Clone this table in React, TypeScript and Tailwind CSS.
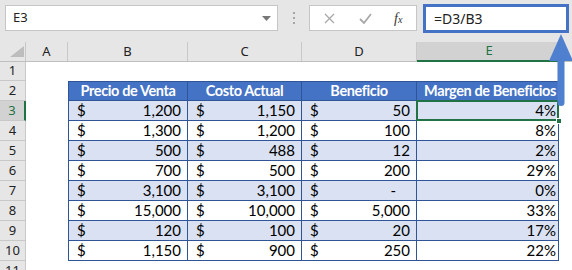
import React from 'react';

const rows = [
  ['1,200', '1,150', '50', '4%'],
  ['1,300', '1,200', '100', '8%'],
  ['500', '488', '12', '2%'],
  ['700', '500', '200', '29%'],
  ['3,100', '3,100', '-', '0%'],
  ['15,000', '10,000', '5,000', '33%'],
  ['120', '100', '20', '17%'],
  ['1,150', '900', '250', '22%'],
];

const cellFont = { fontFamily: 'Lato, "Liberation Sans", sans-serif' };

function Money({ value, width }: { value: string; width: string }) {
  return (
    <div className={`${width} h-full flex items-center justify-between pl-[8px] pr-[6px] border-r border-[#2f5597]`}>
      <span>$</span>
      {value === '-' ? <span className="mr-[14px]">-</span> : <span>{value}</span>}
    </div>
  );
}

export default function App() {
  return (
    <div className="relative w-[572px] h-[270px] overflow-hidden bg-white" style={{ fontFamily: '"Noto Sans", "Liberation Sans", sans-serif' }}>
      {/* formula bar */}
      <div className="h-[42px] bg-[#e6e6e6] flex items-start">
        <div className="ml-[5px] mt-[5px] w-[273px] h-[26px] bg-white border border-[#c6c6c6] flex items-center justify-between pl-[7px] pr-[6px]">
          <span className="text-[13px] text-[#222]">E3</span>
          <svg width="9" height="5" viewBox="0 0 9 5"><path d="M0 0h9L4.5 5z" fill="#777" /></svg>
        </div>
        <div className="w-[31px] h-[36px] flex flex-col items-center justify-center gap-[3px]">
          <span className="w-[2px] h-[2px] bg-[#a6a6a6]" />
          <span className="w-[2px] h-[2px] bg-[#a6a6a6]" />
          <span className="w-[2px] h-[2px] bg-[#a6a6a6]" />
        </div>
        <div className="mt-[5px] w-[108px] h-[26px] bg-white border border-[#c6c6c6] flex items-center">
          <svg className="ml-[14px]" width="11" height="11" viewBox="0 0 11 11"><path d="M1 1l9 9M10 1l-9 9" stroke="#a8a8a8" strokeWidth="1.3" /></svg>
          <svg className="ml-[24px]" width="13" height="11" viewBox="0 0 13 11"><path d="M1 6l4 4 7-9" stroke="#a8a8a8" strokeWidth="1.8" fill="none" /></svg>
          <span className="ml-[22px] text-[14px] italic text-[#333]" style={{ fontFamily: '"Liberation Serif", serif' }}>
            f<span className="text-[10px]">x</span>
          </span>
        </div>
        <div className="ml-[6px] mt-[4px] w-[146px] h-[29px] bg-white border-[3px] border-[#4472c4] flex items-center pl-[8px]">
          <span className="text-[14px] text-[#222]">=D3/B3</span>
        </div>
      </div>

      {/* column headers */}
      <div className="h-[20px] flex bg-[#e6e6e6] border-b border-[#bfbfbf] text-[13px] text-[#222]">
        <div className="w-[26px] h-full relative border-r border-[#c8c8c8]">
          <svg className="absolute left-[10px] top-[4px]" width="14" height="12" viewBox="0 0 14 12"><path d="M14 0v11H0z" fill="#bdbdbd" /></svg>
        </div>
        <div className="w-[42px] flex items-center justify-center border-r border-[#c8c8c8]">A</div>
        <div className="w-[120px] flex items-center justify-center border-r border-[#c8c8c8]">B</div>
        <div className="w-[114px] flex items-center justify-center border-r border-[#c8c8c8]">C</div>
        <div className="w-[115px] flex items-center justify-center border-r border-[#c8c8c8]">D</div>
        <div className="w-[144px] flex items-center justify-center bg-[#d2d2d2] text-[#217346] border-b-2 border-[#217346] -mb-px">E</div>
        <div className="flex-1" />
      </div>

      {/* row 1 */}
      <div className="h-[19px] flex">
        <div className="w-[26px] flex items-center justify-center bg-[#e6e6e6] border-r border-b border-[#c8c8c8] text-[13px] text-[#222]">1</div>
      </div>

      {/* row 2 header */}
      <div className="h-[20px] flex">
        <div className="w-[26px] flex items-center justify-center bg-[#e6e6e6] border-r border-b border-[#c8c8c8] text-[13px] text-[#222]">2</div>
        <div className="w-[42px]" />
        <div className="flex h-full bg-[#4472c4] border border-[#2f5597] text-white font-bold text-[14.5px] tracking-[-0.4px] whitespace-nowrap" style={cellFont}>
          <div className="w-[119px] flex items-center justify-center border-r border-[#2f5597]">Precio de Venta</div>
          <div className="w-[114px] flex items-center justify-center border-r border-[#2f5597]">Costo Actual</div>
          <div className="w-[115px] flex items-center justify-center border-r border-[#2f5597]">Beneficio</div>
          <div className="w-[141px] flex items-center justify-end pr-[2px] overflow-hidden">Margen de Beneficios</div>
        </div>
      </div>

      {rows.map((r, i) => {
        const n = i + 3;
        const band = i % 2 === 0 ? 'bg-[#d9e1f2]' : 'bg-white';
        const active = n === 3;
        return (
          <div key={n} className="h-[20px] flex">
            <div
              className={`w-[26px] flex items-center justify-center border-b border-[#c8c8c8] text-[13px] ${
                active ? 'bg-[#d2d2d2] text-[#217346] border-r-2 border-r-[#217346]' : 'bg-[#e6e6e6] text-[#222] border-r border-r-[#c8c8c8]'
              }`}
            >
              {n}
            </div>
            <div className="w-[42px]" />
            <div className={`flex h-full ${band} border-l border-r border-b border-[#2f5597] text-[15px] text-black`} style={cellFont}>
              <Money value={r[0]} width="w-[119px]" />
              <Money value={r[1]} width="w-[114px]" />
              <Money value={r[2]} width="w-[115px]" />
              <div className="relative w-[141px] h-full flex items-center justify-end pr-[2px]">
                {active && (
                  <>
                    <div className="absolute -left-px -top-px -right-px -bottom-px border-2 border-[#217346]" />
                    <div className="absolute -right-[4px] -bottom-[4px] w-[6px] h-[6px] bg-[#217346] border border-white" />
                  </>
                )}
                <span className="relative">{r[3]}</span>
              </div>
            </div>
          </div>
        );
      })}

      {/* row 11 header */}
      <div className="h-[20px] flex">
        <div className="w-[26px] flex items-center justify-center bg-[#e6e6e6] border-r border-[#c8c8c8] text-[13px] text-[#222]">11</div>
      </div>

      {/* arrow pointing to formula */}
      <svg className="absolute left-[548px] top-[34px]" width="26" height="74" viewBox="0 0 26 74">
        <path d="M13 0L25 27H1z" fill="#4f7fcf" />
        <rect x="9.5" y="24" width="7" height="48" rx="3.5" fill="#4f7fcf" />
      </svg>
    </div>
  );
}
